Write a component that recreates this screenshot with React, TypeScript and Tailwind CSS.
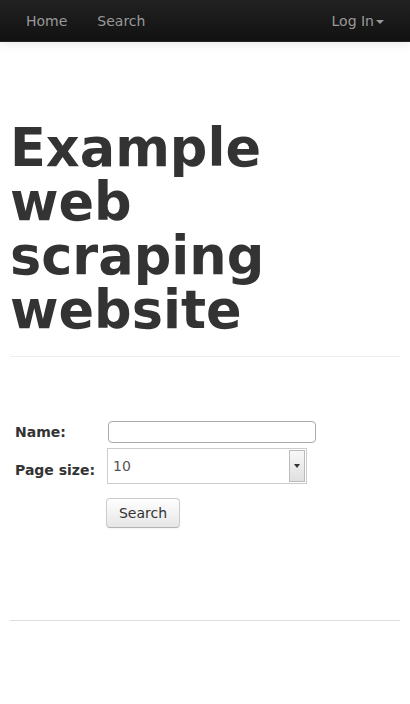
import React from "react";

export default function App() {
  return (
    <div className="min-h-[704px] bg-white text-[#333]" style={{ fontFamily: '"DejaVu Sans", sans-serif' }}>
      <div className="h-[42px] border-b border-[#252525] bg-gradient-to-b from-[#222222] to-[#111111] shadow-[0_1px_10px_rgba(0,0,0,0.1)] flex items-center pt-[2px] text-[14px] text-[#999999]">
        <div className="pl-[26px]">Home</div>
        <div className="pl-[30px]">Search</div>
        <div className="ml-auto pr-[26px] flex items-center">
          Log In
          <span className="ml-[2px] mt-[1px] inline-block w-0 h-0 border-l-[4px] border-r-[4px] border-t-[4px] border-l-transparent border-r-transparent border-t-[#999999]" />
        </div>
      </div>
      <div className="px-[10px]">
        <div className="pt-[79px] pb-[19px] border-b border-[#eeeeee]">
          <h1 className="text-[52.5px] leading-[54px] font-bold text-[#333]">
            Example
            <br />
            web
            <br />
            scraping
            <br />
            website
          </h1>
        </div>
        <div className="pt-[64px] pb-[92px] border-b border-[#dddddd] text-[14px]">
          <div className="grid grid-cols-[93px_auto] items-center gap-y-[5px] pl-[5px]">
            <label className="font-bold">Name:</label>
            <div>
              <div className="w-[208px] h-[22px] border border-[#aaaaaa] rounded-[4px] bg-white" />
            </div>
            <label className="font-bold pt-[9px]">Page size:</label>
            <div className="ml-[-1px] w-[200px] h-[36px] border border-[#cccccc] bg-white flex items-center justify-between">
              <span className="pl-[5px] text-[14px] text-[#555]">10</span>
              <div className="mr-[1px] w-[16px] h-[32px] border border-[#bbbbbb] bg-gradient-to-b from-[#f8f8f8] to-[#e0e0e0] flex items-center justify-center">
                <span className="inline-block w-0 h-0 border-l-[3px] border-r-[3px] border-t-[4px] border-l-transparent border-r-transparent border-t-[#333]" />
              </div>
            </div>
            <div />
            <div className="pt-[9px]">
              <button className="ml-[-2px] w-[74px] h-[30px] rounded-[4px] border border-[#cccccc] border-b-[#b3b3b3] bg-gradient-to-b from-white to-[#e6e6e6] text-[14px] text-[#333] shadow-[inset_0_1px_0_rgba(255,255,255,0.2),0_1px_2px_rgba(0,0,0,0.05)]">
                Search
              </button>
            </div>
          </div>
        </div>
      </div>
    </div>
  );
}
